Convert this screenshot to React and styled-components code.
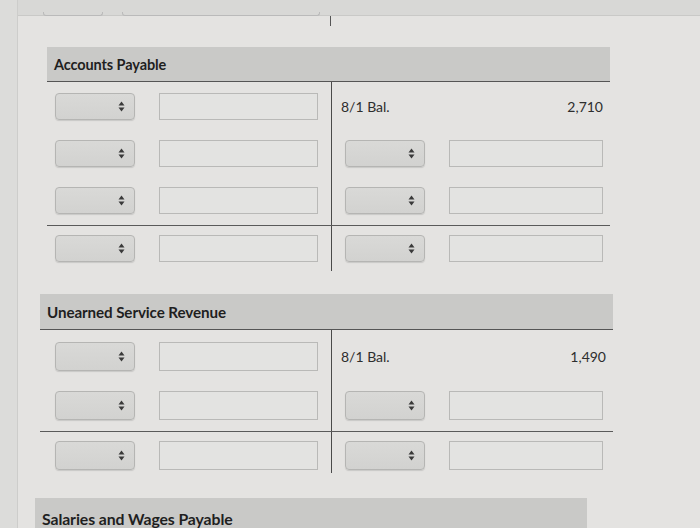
import React from 'react';
import styled, { createGlobalStyle } from 'styled-components';

const GlobalStyle = createGlobalStyle`
    html, body {
        margin: 0;
        padding: 0;
        height: 528px;
        overflow: hidden;
        background-color: #e4e3e1;
        font-family: Lato, "Liberation Sans", sans-serif;
    }
`

const Page = styled.div`
    display: flex;
    width: 700px;
    height: 528px;
    overflow: hidden;
`

const Rail = styled.div`
    width: 17px;
    flex-shrink: 0;
    background-color: #dcdcda;
    border-right: 1px solid #cdcdcb;
`

const Main = styled.div`
    flex: 1;
    min-width: 0;
`

const TopBand = styled.div`
    height: 15px;
    background-color: #d8d8d6;
    border-bottom: 1px solid #c9c9c7;
    position: relative;
`

const Stub = styled.div`
    position: absolute;
    bottom: -1px;
    left: ${p => p.left}px;
    width: ${p => p.width}px;
    height: 3px;
    border: 1px solid #bababa;
    border-top: none;
    border-radius: 0 0 3px 3px;
`

const Tick = styled.div`
    position: absolute;
    left: 312px;
    top: 16px;
    width: 1px;
    height: 10px;
    background-color: #555;
`

const Section = styled.section`
    margin-left: ${p => p.left}px;
    margin-top: ${p => p.top}px;
    width: ${p => p.width}px;
`

const Header = styled.div`
    height: ${p => p.height}px;
    display: flex;
    align-items: center;
    padding-left: 7px;
    background-color: #c9c9c7;
    border-bottom: ${p => (p.open ? 'none' : '1.5px solid #555')};
    font-size: ${p => p.size}px;
    font-weight: 700;
    color: #1f1f1f;
    letter-spacing: -0.1px;
`

const Block = styled.div`
    display: grid;
    grid-template-columns: ${p => p.split}px 1fr;
    border-top: ${p => (p.ruled ? '1.5px solid #5a5a5a' : 'none')};
`

const Column = styled.div`
    display: flex;
    flex-direction: column;
    gap: 20px;
    padding: ${p => p.padTop}px 0 ${p => p.padBottom}px;
    border-left: ${p => (p.right ? '1.5px solid #4a4a4a' : 'none')};
`

const Row = styled.div`
    height: ${p => p.h}px;
    display: flex;
    align-items: center;
    gap: 24px;
    justify-content: ${p => (p.right ? 'flex-start' : 'flex-end')};
    padding: ${p => (p.right ? '0 0 0 13px' : '0 13px 0 0')};
`

const BalRow = styled.div`
    height: ${p => p.h}px;
    display: flex;
    align-items: center;
    justify-content: space-between;
    padding: 0 7px 0 9px;
    font-size: 14px;
    color: #2e2e2e;
`

const Select = styled.div`
    width: 80px;
    height: 100%;
    box-sizing: border-box;
    border: 1px solid #b5b5b3;
    border-radius: 4px;
    background: linear-gradient(#d9d9d7, #d2d2d0);
    box-shadow: 0 1px 1px rgba(0, 0, 0, 0.12);
    display: flex;
    align-items: center;
    justify-content: flex-end;
    padding-right: 9px;
`

const Field = styled.div`
    width: ${p => p.w}px;
    height: 100%;
    box-sizing: border-box;
    border: 1px solid #b9b9b7;
    background-color: #e3e3e1;
`

const Arrows = () => (
    <svg width="7" height="11" viewBox="0 0 7 11">
        <path d="M3.5 0.5 L6.5 4.5 L0.5 4.5 Z" fill="#3a3a3a" />
        <path d="M0.5 6.5 L6.5 6.5 L3.5 10.5 Z" fill="#3a3a3a" />
    </svg>
)

const InputPair = ({ right, h, fieldW }) => (
    <Row right={right} h={h}>
        <Select><Arrows /></Select>
        <Field w={fieldW} />
    </Row>
)

const TAccount = ({ title, titleSize, left, top, width, headerH, rowH, amount, upper, padTop, gapBottom }) => {
    const split = 331 - 18 - left
    return (
        <Section left={left} top={top} width={width}>
            <Header height={headerH} size={titleSize}>{title}</Header>
            <Block split={split}>
                <Column padTop={padTop} padBottom={11}>
                    {Array.from({ length: upper }).map((_, i) => (
                        <InputPair key={i} h={rowH} fieldW={159} />
                    ))}
                </Column>
                <Column right padTop={padTop} padBottom={11}>
                    <BalRow h={rowH}>
                        <span>8/1 Bal.</span>
                        <span>{amount}</span>
                    </BalRow>
                    {Array.from({ length: upper - 1 }).map((_, i) => (
                        <InputPair key={i} right h={rowH} fieldW={154} />
                    ))}
                </Column>
            </Block>
            <Block split={split} ruled>
                <Column padTop={9} padBottom={gapBottom}>
                    <InputPair h={rowH} fieldW={159} />
                </Column>
                <Column right padTop={9} padBottom={gapBottom}>
                    <InputPair right h={rowH} fieldW={154} />
                </Column>
            </Block>
        </Section>
    )
}

const App = () => {
    return (
        <Page>
            <GlobalStyle />
            <Rail />
            <Main>
                <TopBand>
                    <Stub left={25} width={58} />
                    <Stub left={104} width={196} />
                    <Tick />
                </TopBand>
                <TAccount
                    title="Accounts Payable"
                    titleSize={14.5}
                    left={29}
                    top={31}
                    width={563}
                    headerH={34}
                    rowH={27}
                    amount="2,710"
                    upper={3}
                    padTop={11}
                    gapBottom={9}
                />
                <TAccount
                    title="Unearned Service Revenue"
                    titleSize={15.2}
                    left={22}
                    top={23}
                    width={573}
                    headerH={35}
                    rowH={29}
                    amount="1,490"
                    upper={2}
                    padTop={12}
                    gapBottom={3}
                />
                <Section left={17} top={25} width={552}>
                    <Header height={40} size={15.8} open>Salaries and Wages Payable</Header>
                </Section>
            </Main>
        </Page>
    )
}

export default App;
